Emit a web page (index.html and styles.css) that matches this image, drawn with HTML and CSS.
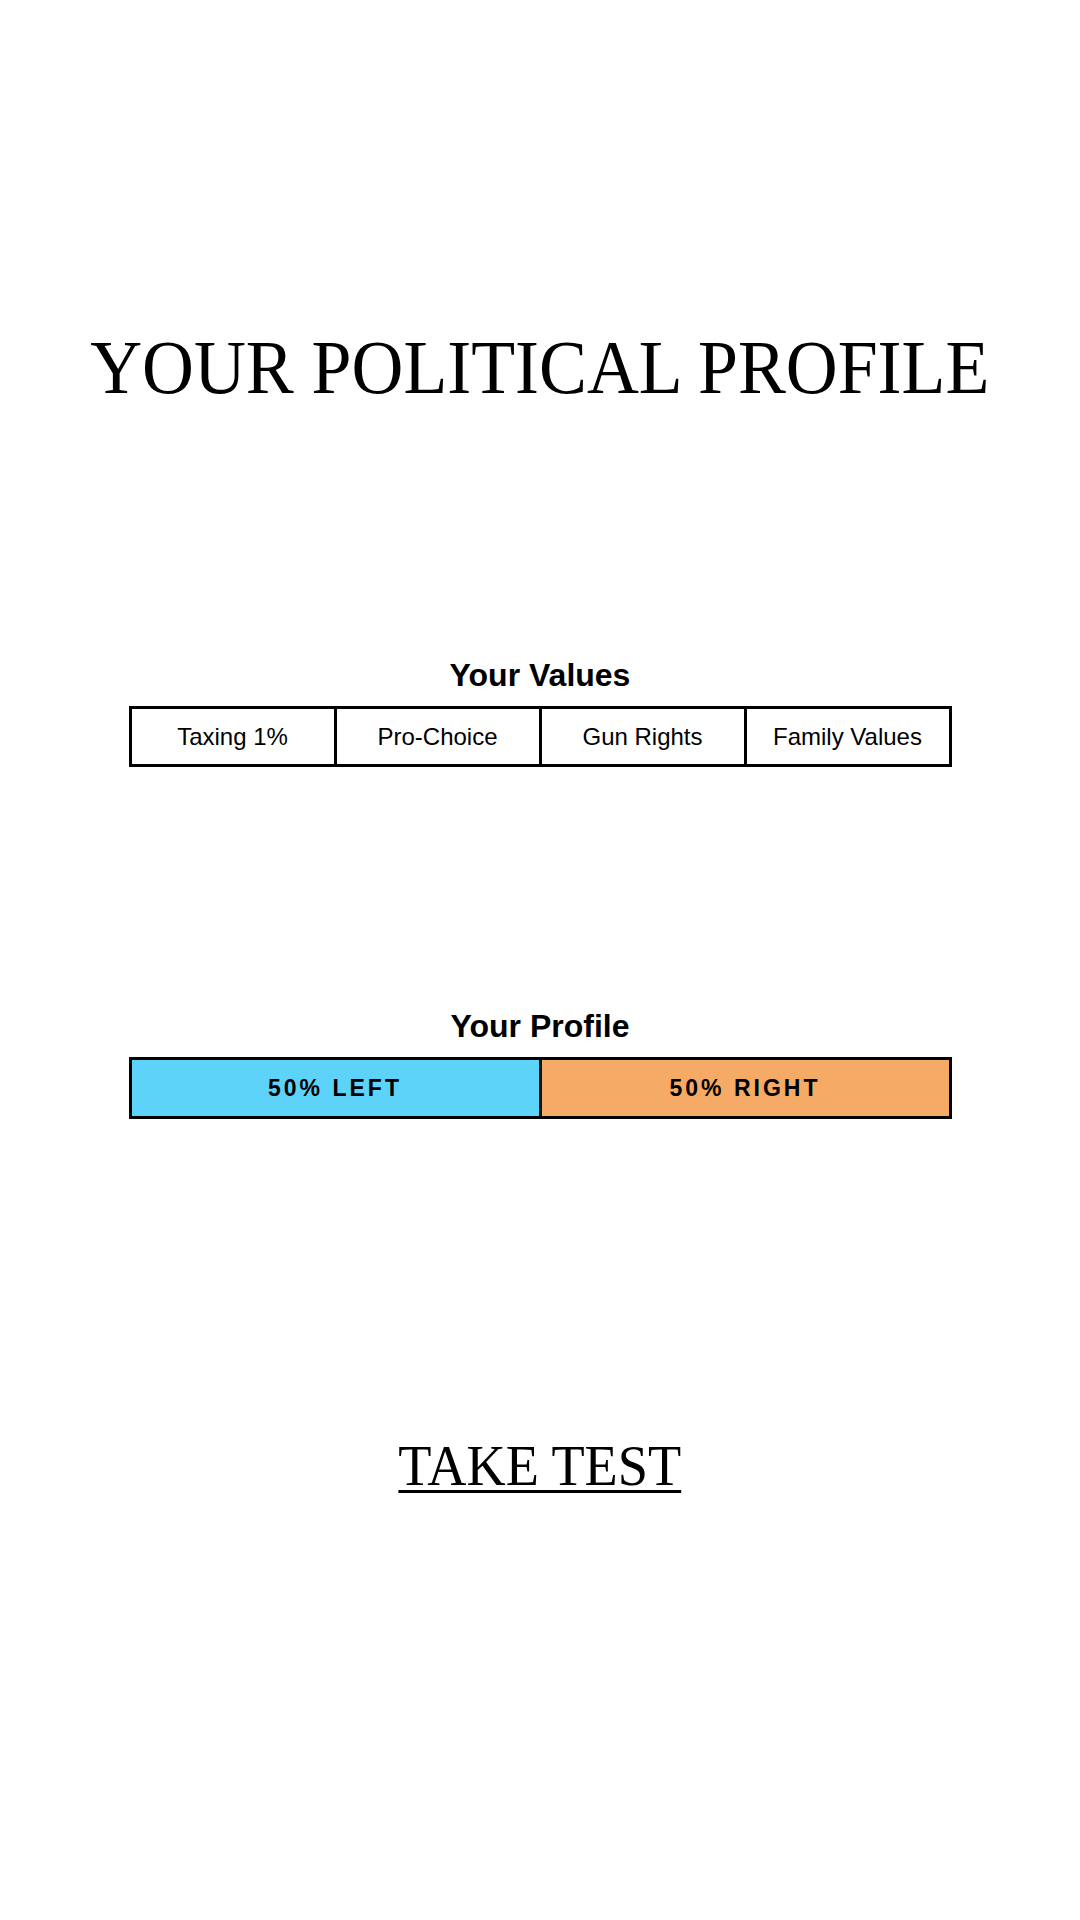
FILE: index.html
```html
<!DOCTYPE html>
<html>
<head>
  <meta charset="utf-8">
  <meta name="viewport" content="width=device-width, initial-scale=1">
  <title>Your Political Profile</title>
  <link rel="stylesheet" href="styles.css">
</head>
<body>

  <div class="page">
    <h1 class="title">YOUR POLITICAL PROFILE</h1>

    <section class="block values">
      <h2>Your Values</h2>
      <div class="grid">
        <div class="cell">Taxing 1%</div>
        <div class="cell">Pro-Choice</div>
        <div class="cell">Gun Rights</div>
        <div class="cell">Family Values</div>
      </div>
    </section>

    <section class="block profile">
      <h2>Your Profile</h2>
      <div class="bar">
        <div class="side left" style="flex-basis: 50%">50% LEFT</div>
        <div class="side right" style="flex-basis: 50%">50% RIGHT</div>
      </div>
    </section>

    <div class="actions">
      <a href="#" class="take-test">TAKE TEST</a>
    </div>
  </div>

</body>
</html>
```

FILE: styles.css
```css
/* General Styling */
body {
  margin: 0;
  padding: 0;
  background-color: #fff;
  color: #000;
  font-family: "Liberation Sans", Arial, sans-serif;
}

.page {
  display: flex;
  flex-direction: column;
  align-items: center;
  padding-top: 329px;
}

.title {
  margin: 0;
  font-family: "Liberation Serif", "Times New Roman", serif;
  font-weight: normal;
  font-size: 76px;
  line-height: 76px;
  white-space: nowrap;
  transform: scaleX(0.945);
}

/* Values and profile blocks */
.block {
  width: 823px;
  display: flex;
  flex-direction: column;
  align-items: stretch;
}

.block h2 {
  margin: 0 0 13px;
  text-align: center;
  font-size: 32px;
  line-height: 36px;
  font-weight: bold;
}

.values {
  margin-top: 252px;
}

.profile {
  margin-top: 241px;
}

.grid {
  display: flex;
  border: 3px solid #000;
}

.cell {
  flex: 1;
  text-align: center;
  font-size: 24px;
  line-height: 55px;
}

.cell + .cell {
  border-left: 3px solid #000;
}

.bar {
  display: flex;
  border: 3px solid #000;
}

.side {
  text-align: center;
  font-size: 23px;
  font-weight: bold;
  letter-spacing: 3px;
  line-height: 56px;
}

.left {
  background-color: #5dd3fa;
}

.right {
  background-color: #f5aa66;
  border-left: 3px solid #111;
}

/* Call to action */
.actions {
  margin-top: 319px;
}

.take-test {
  display: inline-block;
  font-family: "Liberation Serif", "Times New Roman", serif;
  font-size: 56px;
  line-height: 56px;
  color: #000;
  text-decoration: underline;
  text-decoration-thickness: 3px;
  text-underline-offset: 5px;
  transform: scaleX(0.97);
}
```
